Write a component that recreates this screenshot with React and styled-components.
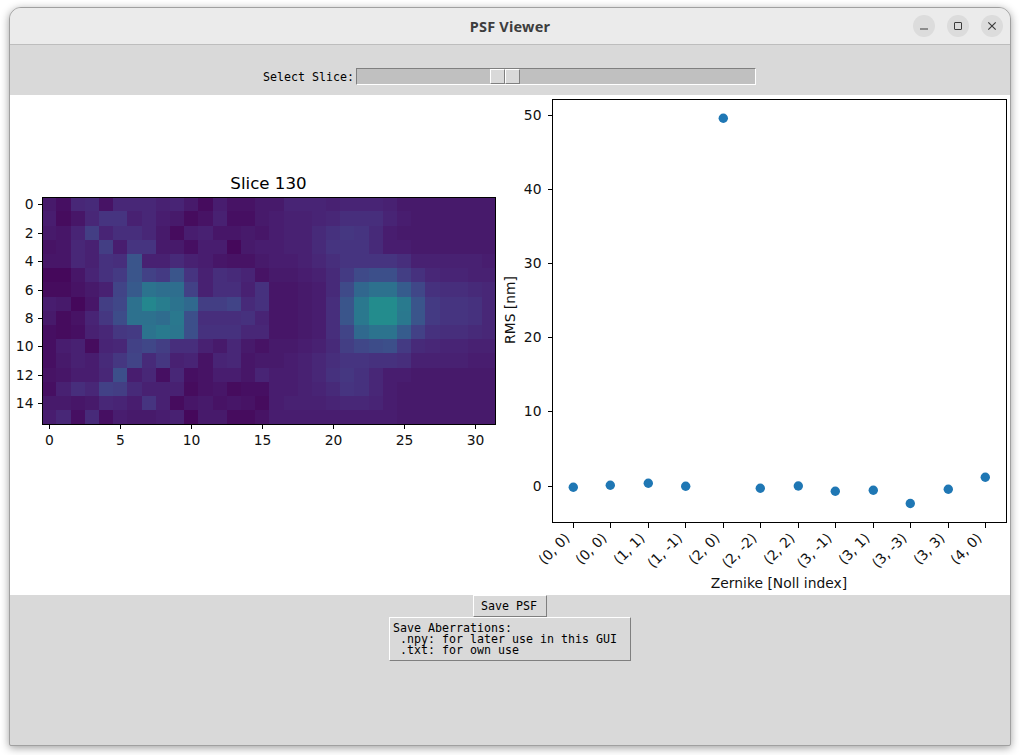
import React from "react";
import styled, { createGlobalStyle } from "styled-components";

const GlobalStyle = createGlobalStyle`
    html, body {
        margin: 0;
        padding: 0;
        background: #ffffff;
    }
    body {
        width: 1020px;
        height: 755px;
        overflow: hidden;
    }
`;

const PLOT_FONT = '"DejaVu Sans", sans-serif';
const TK_FONT = '"DejaVu Sans Mono", monospace';

// viridis stops, one every 0.05 up to the peak of this image
const VIRIDIS = [
    [68, 1, 84], [71, 19, 101], [72, 36, 117], [70, 52, 128], [65, 68, 135], [59, 82, 139],
    [53, 95, 141], [47, 108, 142], [42, 120, 142], [37, 132, 142], [33, 145, 140],
];

const viridis = (value) => {
    const t = Math.min(value / 5, VIRIDIS.length - 1.001);
    const i = Math.floor(t);
    const f = t - i;
    const c = VIRIDIS[i].map((v, k) => Math.round(v + (VIRIDIS[i + 1][k] - v) * f));
    return `rgb(${c[0]},${c[1]},${c[2]})`;
};

const SLICE = [
    [7,4,11,12,5,11,11,11,9,10,7,3,8,5,5,7, 7,10,10,10,9,10,10,10,9,7,7,7,7,7,7,7],
    [8,3,6,11,15,15,9,11,8,7,3,5,9,4,4,7, 8,9,9,10,11,13,13,13,10,8,7,7,7,7,7,7],
    [7,6,10,18,10,13,13,11,7,3,8,9,6,6,7,6, 8,9,9,12,14,16,15,12,8,7,7,7,7,7,7,7],
    [5,6,11,9,18,8,15,15,7,7,4,8,8,2,7,8, 8,9,9,12,15,15,15,12,8,8,7,7,7,7,7,7],
    [6,6,11,9,14,13,26,9,9,12,9,8,6,5,5,7, 8,8,9,11,13,15,15,15,15,13,9,9,9,9,9,8],
    [2,2,6,10,14,17,26,19,17,26,15,9,13,12,10,5, 7,7,8,9,12,17,22,24,24,18,14,11,10,10,9,9],
    [3,3,5,7,9,20,28,38,36,36,19,9,13,13,9,14, 6,6,7,8,12,22,33,37,37,29,21,14,13,13,12,11],
    [8,7,2,6,18,21,37,46,42,38,34,18,18,20,12,14, 6,6,7,8,13,26,40,48,48,41,26,17,15,15,14,11],
    [7,3,5,10,16,23,37,37,35,40,24,13,13,13,14,10, 6,6,7,8,13,26,40,48,48,40,26,17,15,15,14,11],
    [4,3,4,9,11,16,17,38,41,39,24,14,14,14,11,11, 6,6,7,8,13,20,34,38,38,29,19,14,13,13,12,11],
    [4,8,9,3,10,11,19,21,18,13,13,9,7,11,7,5, 7,7,8,9,12,18,21,23,24,17,12,11,10,10,9,9],
    [4,7,9,8,12,16,20,12,16,9,10,5,10,11,6,7, 7,8,9,11,13,15,15,14,14,13,9,9,9,9,8,8],
    [5,6,8,8,11,24,8,11,4,11,4,5,8,8,6,10, 8,8,9,11,14,16,14,11,8,8,7,7,7,7,7,7],
    [4,9,13,11,19,18,12,9,9,9,3,5,6,3,4,4, 8,8,9,10,12,15,14,11,8,7,7,7,7,7,7,7],
    [7,7,6,7,11,10,8,15,9,3,6,7,5,6,5,3, 8,9,9,9,10,11,11,10,8,7,7,7,7,7,7,7],
    [8,11,4,12,4,8,7,7,8,9,2,7,7,3,3,5, 8,8,8,8,8,8,8,8,8,7,7,7,7,7,7,7],
];

const ZERNIKE = [
    { label: "(0, 0)", x: 573.3, y: 487.3 },
    { label: "(0, 0)", x: 610.3, y: 485.3 },
    { label: "(1, 1)", x: 648.3, y: 483.3 },
    { label: "(1, -1)", x: 685.7, y: 486.3 },
    { label: "(2, 0)", x: 723.3, y: 118.3 },
    { label: "(2, -2)", x: 760.3, y: 488.3 },
    { label: "(2, 2)", x: 798.3, y: 486 },
    { label: "(3, -1)", x: 835.3, y: 491.3 },
    { label: "(3, 1)", x: 873.3, y: 490.3 },
    { label: "(3, -3)", x: 910.3, y: 503.5 },
    { label: "(3, 3)", x: 948.3, y: 489.3 },
    { label: "(4, 0)", x: 985.3, y: 477.3 },
];

const HEAT = { left: 42.3, top: 197.3, cell: 14.19 };

const HeatmapPlot = () => {
    const cellX = (c) => Math.round(HEAT.left + c * HEAT.cell);
    const cellY = (r) => Math.round(HEAT.top + r * HEAT.cell);
    return (
        <PlotSvg viewBox="10 95 490 500" width="490" height="500">
            <PlotTitle x={268.5} y={188.5}>Slice 130</PlotTitle>
            {SLICE.map((row, r) =>
                row.map((value, c) => (
                    <HeatCell
                        key={`${r}-${c}`}
                        x={cellX(c)}
                        y={cellY(r)}
                        width={cellX(c + 1) - cellX(c)}
                        height={cellY(r + 1) - cellY(r)}
                        fill={viridis(value)}
                    />
                ))
            )}
            <AxesFrame x="42.5" y="197.5" width="453" height="227" />
            {[0, 5, 10, 15, 20, 25, 30].map((t) => {
                const x = Math.round(HEAT.left + (t + 0.5) * HEAT.cell) + 0.5;
                return (
                    <g key={t}>
                        <Tick x1={x} x2={x} y1={424} y2={429} />
                        <TickLabel x={x} y={445} textAnchor="middle">{t}</TickLabel>
                    </g>
                );
            })}
            {[0, 2, 4, 6, 8, 10, 12, 14].map((t) => {
                const y = Math.round(HEAT.top + (t + 0.5) * HEAT.cell) + 0.5;
                return (
                    <g key={t}>
                        <Tick x1={37.5} x2={42} y1={y} y2={y} />
                        <TickLabel x={33.5} y={y + 4} textAnchor="end">{t}</TickLabel>
                    </g>
                );
            })}
        </PlotSvg>
    );
};

const ScatterPlot = () => (
    <PlotSvg viewBox="500 95 509 500" width="509" height="500">
        <AxesFrame x="552.5" y="99.5" width="454" height="423" />
        {[0, 10, 20, 30, 40, 50].map((t) => {
            const y = 486 - t * 7.41;
            return (
                <g key={t}>
                    <Tick x1="547.5" x2="552" y1={y} y2={y} />
                    <TickLabel x={541.5} y={y + 4.5} textAnchor="end">{t}</TickLabel>
                </g>
            );
        })}
        {ZERNIKE.map((z, i) => (
            <g key={i}>
                <Tick x1={z.x} x2={z.x} y1="523" y2="527.5" />
                <circle cx={z.x} cy={z.y} r="4.7" fill="#1f77b4" />
                <TickLabel x={z.x - 2.6} y={538.9} textAnchor="end" transform={`rotate(-45 ${z.x - 2.6} 538.9)`}>
                    {z.label}
                </TickLabel>
            </g>
        ))}
        <TickLabel x={779} y={588} textAnchor="middle">Zernike [Noll index]</TickLabel>
        <TickLabel x={515} y={310} textAnchor="middle" transform="rotate(-90 515 310)">RMS [nm]</TickLabel>
    </PlotSvg>
);

const App = () => (
    <>
        <GlobalStyle />
        <Window>
            <TitleBar>
                <span />
                <Title>PSF Viewer</Title>
                <WindowButtons>
                    <WinButton aria-label="Minimize">
                        <svg width="10" height="10" viewBox="0 0 10 10">
                            <line x1="1" x2="9" y1="8" y2="8" stroke="#3c3c3c" strokeWidth="1.2" />
                        </svg>
                    </WinButton>
                    <WinButton aria-label="Maximize">
                        <svg width="10" height="10" viewBox="0 0 10 10">
                            <rect x="1.5" y="1.5" width="7" height="7" rx="0.5" fill="none" stroke="#3c3c3c" strokeWidth="1" />
                        </svg>
                    </WinButton>
                    <WinButton aria-label="Close">
                        <svg width="10" height="10" viewBox="0 0 10 10">
                            <path d="M1.3 1.3 L8.7 8.7 M8.7 1.3 L1.3 8.7" stroke="#3c3c3c" strokeWidth="1.2" />
                        </svg>
                    </WinButton>
                </WindowButtons>
            </TitleBar>
            <SliderBar>
                <SliceLabel>Select Slice:</SliceLabel>
                <Trough>
                    <Handle />
                    <Handle />
                </Trough>
            </SliderBar>
            <PlotArea>
                <HeatmapPlot />
                <ScatterPlot />
            </PlotArea>
            <Controls>
                <SaveButton>Save PSF</SaveButton>
                <AberrationsButton>{"Save Aberrations:\n .npy: for later use in this GUI\n .txt: for own use"}</AberrationsButton>
            </Controls>
        </Window>
    </>
);

const Window = styled.div`
    box-sizing: border-box;
    width: 1002px;
    height: 739px;
    margin: 7px 0 0 9px;
    display: flex;
    flex-direction: column;
    background: #d9d9d9;
    border: 1px solid #a0a0a0;
    border-radius: 12px 12px 2px 2px;
    box-shadow: 0 2px 9px rgba(0, 0, 0, 0.38);
    overflow: hidden;
`;

const TitleBar = styled.header`
    box-sizing: border-box;
    height: 37px;
    flex: none;
    display: grid;
    grid-template-columns: 1fr auto 1fr;
    align-items: center;
    background: #ebebeb;
    border-bottom: 1px solid #bdbdbd;
`;

const Title = styled.div`
    font-family: "Noto Sans", sans-serif;
    font-weight: 700;
    font-size: 14.5px;
    letter-spacing: 0.2px;
    color: #3d3d3d;
`;

const WindowButtons = styled.div`
    justify-self: end;
    display: flex;
    gap: 12px;
    padding-right: 7px;
`;

const WinButton = styled.button`
    width: 22px;
    height: 22px;
    padding: 0;
    border: 0;
    border-radius: 50%;
    background: #dcdcdc;
    display: flex;
    align-items: center;
    justify-content: center;
`;

const SliderBar = styled.div`
    box-sizing: border-box;
    height: 50px;
    flex: none;
    display: flex;
    justify-content: center;
    align-items: flex-end;
    padding-bottom: 10px;
`;

const SliceLabel = styled.span`
    width: 91px;
    height: 16px;
    margin: 0 2px 0 -1px;
    padding-top: 1px;
    font-family: ${TK_FONT};
    font-size: 11.63px;
    line-height: 17px;
    white-space: pre;
    color: #000;
`;

const Trough = styled.div`
    box-sizing: border-box;
    width: 400px;
    height: 17px;
    padding-left: 133px;
    display: flex;
    background: #c0c0c0;
    border-style: solid;
    border-width: 1px;
    border-color: #7f7f7f #ffffff #ffffff #7f7f7f;
`;

const Handle = styled.div`
    box-sizing: border-box;
    width: 15px;
    height: 15px;
    background: #d9d9d9;
    border-style: solid;
    border-width: 1px;
    border-color: #ffffff #7f7f7f #7f7f7f #ffffff;
`;

const PlotArea = styled.main`
    height: 500px;
    flex: none;
    display: flex;
    background: #ffffff;
`;

const PlotSvg = styled.svg`
    display: block;
    flex: none;
`;

const HeatCell = styled.rect`
    shape-rendering: crispEdges;
`;

const AxesFrame = styled.rect`
    fill: none;
    stroke: #000;
    stroke-width: 1;
    shape-rendering: crispEdges;
`;

const Tick = styled.line`
    stroke: #000;
    stroke-width: 1;
    shape-rendering: crispEdges;
`;

const PlotTitle = styled.text`
    font-family: ${PLOT_FONT};
    font-size: 16.67px;
    text-anchor: middle;
    fill: #000;
`;

const TickLabel = styled.text`
    font-family: ${PLOT_FONT};
    font-size: 13.89px;
    fill: #111;
`;

const Controls = styled.footer`
    flex: 1;
    display: flex;
    flex-direction: column;
    align-items: center;
`;

const SaveButton = styled.button`
    box-sizing: border-box;
    width: 74px;
    height: 22px;
    padding: 0 2px 0 0;
    font-family: ${TK_FONT};
    font-size: 11.63px;
    color: #000;
    background: #d9d9d9;
    border-style: solid;
    border-width: 1px;
    border-color: #ffffff #7f7f7f #7f7f7f #ffffff;
`;

const AberrationsButton = styled.button`
    box-sizing: border-box;
    width: 242px;
    height: 44px;
    padding: 4px 3px;
    font-family: ${TK_FONT};
    font-size: 11.63px;
    line-height: 11px;
    white-space: pre;
    text-align: left;
    color: #000;
    background: #d9d9d9;
    border-style: solid;
    border-width: 1px;
    border-color: #ffffff #7f7f7f #7f7f7f #ffffff;
`;

export default App;
